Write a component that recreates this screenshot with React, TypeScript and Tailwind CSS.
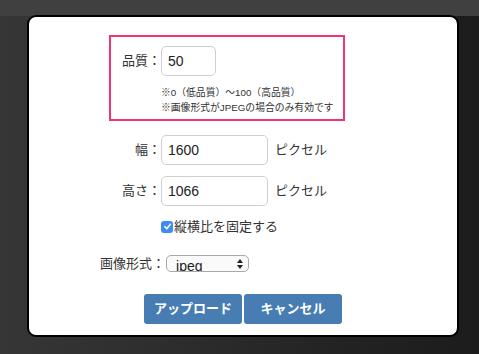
import { useState } from "react";

const font = {
  fontFamily: '"Liberation Sans", "Noto Sans CJK JP", sans-serif',
};

function Field({ label, value, width, unit }: { label: string; value: string; width: string; unit?: string }) {
  return (
    <div className="flex items-center">
      <span className="w-[132px] shrink-0 text-right text-[13px] text-[#333]">{label}</span>
      <div
        className={`${width} flex h-[30px] items-center rounded-[5px] border border-[#cfcfcf] bg-white px-[6px] text-[14px] text-[#222]`}
      >
        {value}
      </div>
      {unit && <span className="ml-[7px] text-[13px] text-[#333]">{unit}</span>}
    </div>
  );
}

export default function App() {
  const [keepRatio, setKeepRatio] = useState(true);

  return (
    <div
      style={font}
      className="h-[354px] w-[479px] overflow-hidden bg-[linear-gradient(to_bottom,#404040_0px,#404040_16px,transparent_16px),linear-gradient(to_right,#363636,#2c2c2c_40%,#232323_70%,#1c1c1c)] pt-[15px]"
    >
      <div className="ml-[27px] h-[322px] w-[432px] rounded-[9px] border-2 border-black bg-white">
        {/* quality block, highlighted */}
        <div className="ml-[80px] mt-[18px] h-[86px] w-[236px] border-2 border-[#f2346f] pt-[9px]">
          <div className="flex items-center">
            <span className="w-[50px] shrink-0 text-right text-[13px] text-[#333]">品質：</span>
            <div className="flex h-[30px] w-[55px] items-center rounded-[5px] border border-[#cfcfcf] bg-white px-[6px] text-[14px] text-[#222]">
              50
            </div>
          </div>
          <div className="ml-[50px] mt-[9px] whitespace-nowrap text-[9.8px] leading-[15px] text-[#333]">
            <p>※0（低品質）〜100（高品質）</p>
            <p>※画像形式がJPEGの場合のみ有効です</p>
          </div>
        </div>

        <div className="mt-[14px] flex flex-col gap-[11px]">
          <Field label="幅：" value="1600" width="w-[107px]" unit="ピクセル" />
          <Field label="高さ：" value="1066" width="w-[107px]" unit="ピクセル" />
        </div>

        <label className="ml-[132px] mt-[11px] flex cursor-pointer items-center text-[13px] text-[#333]">
          <span
            onClick={() => setKeepRatio(!keepRatio)}
            className={`flex h-[12px] w-[12px] items-center justify-center rounded-[3px] ${
              keepRatio ? "bg-[#3c8cf2]" : "border border-[#999] bg-white"
            }`}
          >
            {keepRatio && (
              <svg width="9" height="9" viewBox="0 0 10 10">
                <path d="M2 5.2 L4.2 7.4 L8.2 2.6" fill="none" stroke="white" strokeWidth="1.8" strokeLinecap="round" strokeLinejoin="round" />
              </svg>
            )}
          </span>
          <span className="ml-[1px]">縦横比を固定する</span>
        </label>

        <div className="mt-[17px] flex items-center">
          <span className="ml-[71px] text-[13px] text-[#333]">画像形式：</span>
          <div className="relative ml-[1px] h-[17px] w-[83px] overflow-hidden rounded-[5px] border border-[#a9a9a9] bg-[#fafafa]">
            <span className="absolute left-[9px] top-[1px] text-[14px] leading-[18px] text-[#222]">jpeg</span>
            <svg className="absolute right-[5px] top-[3px]" width="6" height="10" viewBox="0 0 6 10">
              <path d="M0 4 L3 0 L6 4 Z M0 6 L3 10 L6 6 Z" fill="#222" />
            </svg>
          </div>
        </div>

        <div className="mt-[21px] flex justify-center gap-[2px]">
          <button className="h-[30px] w-[98px] rounded-[3px] bg-[#477db3] text-[13px] font-bold text-white">
            アップロード
          </button>
          <button className="h-[30px] w-[98px] rounded-[3px] bg-[#477db3] text-[13px] font-bold text-white">
            キャンセル
          </button>
        </div>
      </div>
    </div>
  );
}
